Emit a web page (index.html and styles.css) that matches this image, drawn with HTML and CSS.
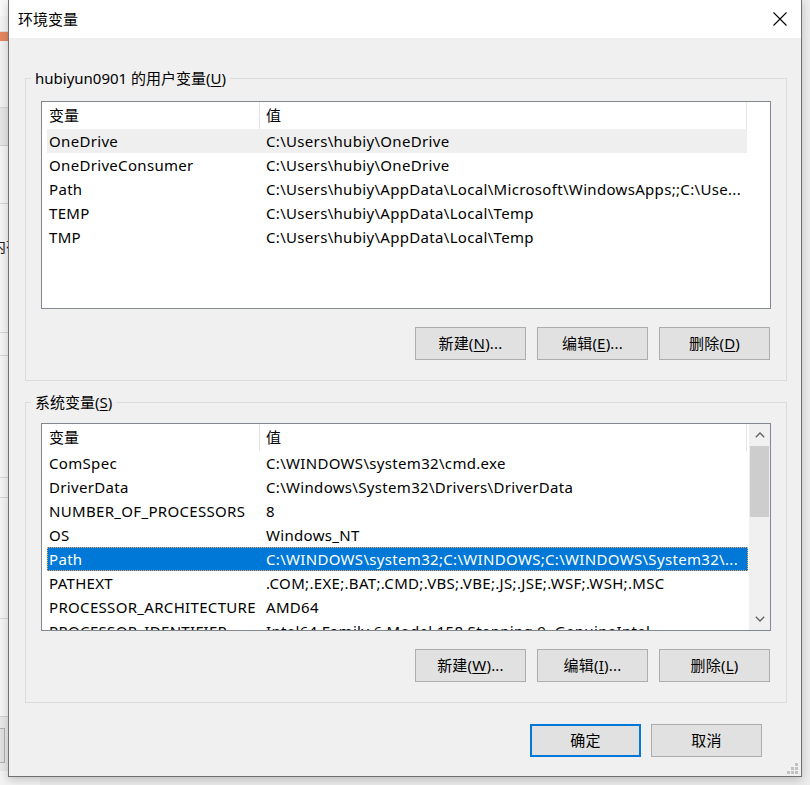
FILE: index.html
```html
<!DOCTYPE html>
<html lang="zh-CN">
<head>
<meta charset="utf-8">
<title>环境变量</title>
<link rel="stylesheet" href="styles.css">
</head>
<body>
<div class="desk">
  <div class="bgwin">
    <div class="band b-top"></div>
    <div class="band b-orange"></div>
    <div class="band b-white1"></div>
    <div class="band b-gray1"></div>
    <div class="band b-white2"></div>
    <div class="band b-text"><span class="bgtext">内存</span></div>
    <div class="band b-white3"></div>
    <div class="band b-white4"></div>
    <div class="band b-white5"></div>
    <div class="band b-white6"></div>
    <div class="band b-white7"></div>
    <div class="band b-foot"><div class="bgbtn"></div></div>
  </div>

  <div class="dialog">
    <div class="titlebar">
      <span class="title">环境变量</span>
      <svg class="close" width="14" height="14" viewBox="0 0 14 14"><path d="M0.5 0.5 L13.5 13.5 M13.5 0.5 L0.5 13.5" stroke="#000" stroke-width="1.1" fill="none"/></svg>
    </div>
    <div class="body">
      <div class="group g1">
        <div class="glabel">hubiyun0901 的用户变量(<u>U</u>)</div>
        <div class="list">
          <div class="lmain">
            <div class="lhead"><div class="hc c1">变量</div><div class="hc c2">值</div></div>
            <div class="row hover"><span class="c1">OneDrive</span><span class="c2">C:\Users\hubiy\OneDrive</span></div>
            <div class="row"><span class="c1">OneDriveConsumer</span><span class="c2">C:\Users\hubiy\OneDrive</span></div>
            <div class="row"><span class="c1">Path</span><span class="c2">C:\Users\hubiy\AppData\Local\Microsoft\WindowsApps;;C:\Use...</span></div>
            <div class="row"><span class="c1">TEMP</span><span class="c2">C:\Users\hubiy\AppData\Local\Temp</span></div>
            <div class="row"><span class="c1">TMP</span><span class="c2">C:\Users\hubiy\AppData\Local\Temp</span></div>
          </div>
        </div>
        <div class="btns">
          <button class="btn">新建(<u>N</u>)...</button>
          <button class="btn">编辑(<u>E</u>)...</button>
          <button class="btn">删除(<u>D</u>)</button>
        </div>
      </div>

      <div class="group g2">
        <div class="glabel">系统变量(<u>S</u>)</div>
        <div class="list">
          <div class="lmain">
            <div class="lhead"><div class="hc c1">变量</div><div class="hc c2">值</div></div>
            <div class="row"><span class="c1">ComSpec</span><span class="c2">C:\WINDOWS\system32\cmd.exe</span></div>
            <div class="row"><span class="c1">DriverData</span><span class="c2">C:\Windows\System32\Drivers\DriverData</span></div>
            <div class="row"><span class="c1">NUMBER_OF_PROCESSORS</span><span class="c2">8</span></div>
            <div class="row"><span class="c1">OS</span><span class="c2">Windows_NT</span></div>
            <div class="row sel"><span class="c1">Path</span><span class="c2">C:\WINDOWS\system32;C:\WINDOWS;C:\WINDOWS\System32\...</span></div>
            <div class="row"><span class="c1">PATHEXT</span><span class="c2">.COM;.EXE;.BAT;.CMD;.VBS;.VBE;.JS;.JSE;.WSF;.WSH;.MSC</span></div>
            <div class="row"><span class="c1">PROCESSOR_ARCHITECTURE</span><span class="c2">AMD64</span></div>
            <div class="row"><span class="c1">PROCESSOR_IDENTIFIER</span><span class="c2">Intel64 Family 6 Model 158 Stepping 9, GenuineIntel</span></div>
          </div>
          <div class="vscroll">
            <div class="sbtn"><svg width="10" height="6" viewBox="0 0 10 6"><path d="M0.8 5.2 L5 1 L9.2 5.2" stroke="#606060" stroke-width="1.3" fill="none"/></svg></div>
            <div class="thumb"></div>
            <div class="track"></div>
            <div class="sbtn"><svg width="10" height="6" viewBox="0 0 10 6"><path d="M0.8 0.8 L5 5 L9.2 0.8" stroke="#606060" stroke-width="1.3" fill="none"/></svg></div>
          </div>
        </div>
        <div class="btns">
          <button class="btn">新建(<u>W</u>)...</button>
          <button class="btn">编辑(<u>I</u>)...</button>
          <button class="btn">删除(<u>L</u>)</button>
        </div>
      </div>

      <div class="actions">
        <button class="btn ok">确定</button>
        <button class="btn">取消</button>
      </div>
    </div>
    <svg class="grip" width="11" height="11" viewBox="0 0 11 11">
      <rect x="8" y="0" width="3" height="3" fill="#c2c2c2"/>
      <rect x="4" y="4" width="3" height="3" fill="#c2c2c2"/>
      <rect x="8" y="4" width="3" height="3" fill="#c2c2c2"/>
      <rect x="0" y="8" width="3" height="3" fill="#c2c2c2"/>
      <rect x="4" y="8" width="3" height="3" fill="#c2c2c2"/>
      <rect x="8" y="8" width="3" height="3" fill="#c2c2c2"/>
    </svg>
  </div>
</div>
</body>
</html>
```

FILE: styles.css
```css
html, body {
  margin: 0;
  padding: 0;
}
body {
  width: 810px;
  height: 785px;
  overflow: hidden;
  background: #ececec;
  font-family: "Noto Sans", "Noto Sans CJK SC", sans-serif;
  font-size: 15px;
  color: #000;
}
.desk {
  position: relative;
  width: 810px;
  height: 785px;
}

/* background window peeking at the left */
.bgwin {
  position: absolute;
  left: 0;
  top: 0;
  width: 40px;
  height: 785px;
  background: #f3f3f3;
  display: flex;
  flex-direction: column;
}
.band { flex: none; box-sizing: border-box; }
.b-top { height: 32px; background: #f4f4f4; border-top: 16px solid #f9f9f9; border-bottom: 1px solid #e0e0e0; }
.b-orange { height: 9px; background: #e4875f; }
.b-white1 { height: 67px; background: #f2f2f2; border-top: 28px solid #f2f2f2; border-bottom: 1px solid #d6d6d6; }
.b-gray1 { height: 38px; background: #e6e6e6; border-bottom: 1px solid #d0d0d0; }
.b-white2 { height: 58px; background: #f5f5f5; border-bottom: 1px solid #d6d6d6; }
.b-text { height: 129px; background: #f5f5f5; border-bottom: 1px solid #d6d6d6; position: relative; overflow: hidden; }
.bgtext { position: absolute; left: -9px; top: 31px; font-size: 15px; color: #222; }
.b-white3 { height: 23px; background: #f5f5f5; border-bottom: 1px solid #d6d6d6; }
.b-white4 { height: 122px; background: #f5f5f5; border-bottom: 1px solid #d6d6d6; }
.b-white5 { height: 20px; background: #f5f5f5; border-bottom: 1px solid #d6d6d6; }
.b-white6 { height: 121px; background: #f5f5f5; border-bottom: 1px solid #d6d6d6; }
.b-white7 { height: 97px; background: #f5f5f5; }
.b-foot { height: 55px; background: #e8e8e8; border-top: 1px solid #d0d0d0; padding-top: 11px; }
.bgbtn { width: 4px; height: 33px; border: 1px solid #b0b0b0; border-left: none; background: #e1e1e1; }

/* dialog */
.dialog {
  position: absolute;
  left: 8px;
  top: -1px;
  width: 794px;
  height: 778px;
  box-sizing: border-box;
  border: 1px solid #707070;
  background: #f0f0f0;
  box-shadow: 0 3px 9px rgba(0, 0, 0, 0.2);
  display: flex;
  flex-direction: column;
}
.titlebar {
  flex: none;
  height: 38px;
  background: #fff;
  display: flex;
  align-items: center;
  padding-left: 9px;
}
.title { line-height: 20px; }
.close {
  margin-left: auto;
  margin-right: 14px;
}
.body {
  flex: 1;
  padding: 40px 14px 0 16px;
}
.group {
  position: relative;
  border: 1px solid #dcdcdc;
  padding: 22px 15px 20px 15px;
}
.g2 {
  margin-top: 21px;
  padding-top: 20px;
}
.glabel {
  position: absolute;
  left: 5px;
  top: -11px;
  padding: 0 4px;
  line-height: 20px;
  background: #f0f0f0;
  white-space: nowrap;
}
u { text-underline-offset: 2px; }

.list {
  height: 208px;
  box-sizing: border-box;
  border: 1px solid #828790;
  background: #fff;
  display: flex;
  overflow: hidden;
}
.lmain {
  flex: 1;
  min-width: 0;
  overflow: hidden;
}
.lhead {
  display: flex;
  height: 27px;
  line-height: 26px;
}
.hc {
  flex: none;
  box-sizing: border-box;
  border-right: 1px solid #e5e5e5;
}
.hc.c1 { width: 218px; padding-left: 7px; }
.hc.c2 { width: 487px; padding-left: 6px; }

.row {
  display: flex;
  width: 700px;
  margin-left: 5px;
  height: 24px;
  line-height: 24px;
  white-space: nowrap;
  box-sizing: border-box;
  letter-spacing: 0.32px;
}
.row .c1 {
  flex: none;
  width: 219px;
  padding-left: 2px;
  box-sizing: border-box;
}
.row .c2 {
  flex: 1;
  overflow: hidden;
}
.row.hover { background: #efefef; }
.row.sel {
  width: 701px;
  background: #0078d7;
  color: #fff;
  outline: 1px dotted #f6a95c;
  outline-offset: -1px;
}

.vscroll {
  flex: none;
  width: 21px;
  background: #f0f0f0;
  display: flex;
  flex-direction: column;
}
.sbtn {
  flex: none;
  height: 22px;
  display: flex;
  align-items: center;
  justify-content: center;
}
.thumb {
  flex: none;
  height: 71px;
  margin: 0 1px 0 1px;
  background: #cdcdcd;
}
.track { flex: 1; }

.btns {
  display: flex;
  justify-content: flex-end;
  gap: 11px;
  margin-top: 18px;
  margin-right: 1px;
}
.btn {
  width: 111px;
  height: 33px;
  box-sizing: border-box;
  border: 1px solid #adadad;
  background: #e1e1e1;
  font: inherit;
  color: #000;
  padding: 0;
  line-height: 31px;
  text-align: center;
  letter-spacing: 0.2px;
}
.actions {
  display: flex;
  justify-content: flex-end;
  gap: 10px;
  margin-top: 21px;
  margin-right: 25px;
}
.btn.ok {
  border: 2px solid #0078d7;
  line-height: 29px;
}
.grip {
  position: absolute;
  right: 3px;
  bottom: 2px;
}
```
